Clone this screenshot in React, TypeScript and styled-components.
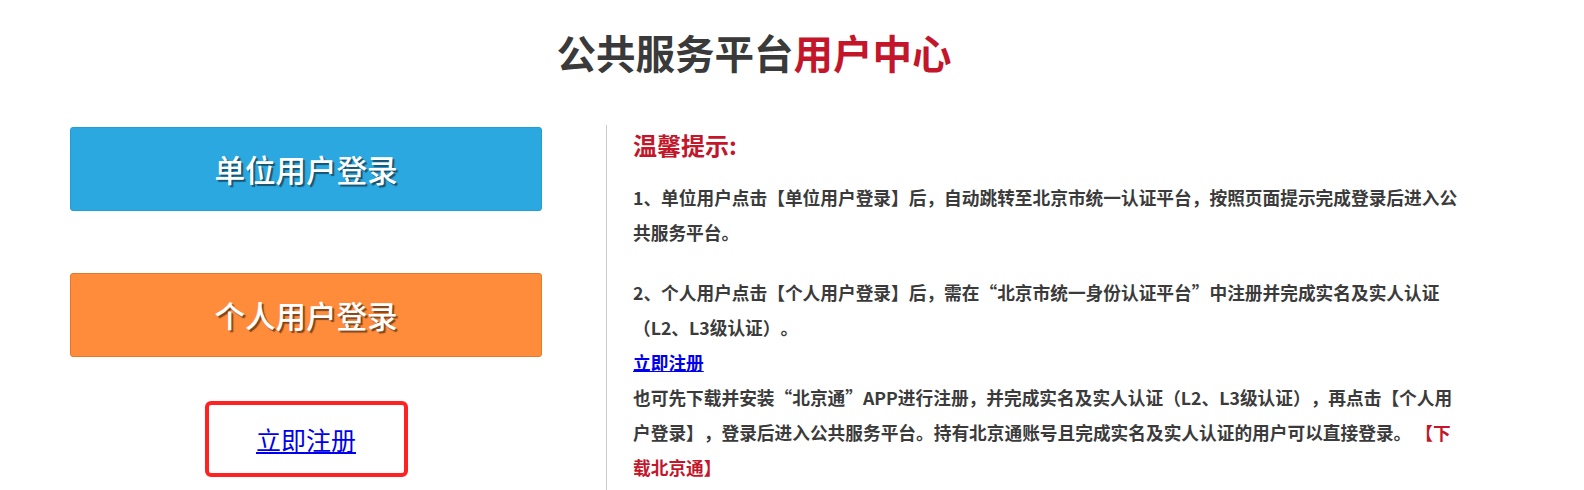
import React from 'react';
import styled, { createGlobalStyle } from 'styled-components';

const GlobalStyle = createGlobalStyle`
  html, body { margin: 0; padding: 0; background: #ffffff; }
  body {
    font-family: "Noto Sans CJK SC", "Microsoft YaHei", "Noto Sans", sans-serif;
    text-spacing-trim: space-all;
  }
`;

const Page = styled.div`
  width: 1508px;
  height: 490px;
  overflow: hidden;
`;

const Title = styled.h1`
  margin: 22px 0 0;
  height: 60px;
  line-height: 60px;
  font-size: 39.5px;
  font-weight: 700;
  text-align: center;
  color: #3a3a3a;
`;

const Accent = styled.span`
  color: #c4162a;
`;

const Main = styled.div`
  display: flex;
  margin-top: 45px;
  padding-left: 70px;
  height: 370px;
`;

const LeftCol = styled.div`
  width: 472px;
  display: flex;
  flex-direction: column;
  align-items: center;
`;

const LoginButton = styled.button<{ $tone: 'blue' | 'orange' }>`
  width: 100%;
  height: 84px;
  box-sizing: border-box;
  margin: 0;
  border: 1px solid ${(p) => (p.$tone === 'blue' ? '#1f9ed8' : '#e4772a')};
  border-radius: 3px;
  background: ${(p) => (p.$tone === 'blue' ? '#2ca8e0' : '#ff8c3b')};
  color: #ffffff;
  font-family: inherit;
  font-size: 30.5px;
  font-weight: 500;
  text-shadow: 2px 2px 1px rgba(0, 0, 0, 0.5);
  display: flex;
  align-items: center;
  justify-content: center;
  cursor: pointer;
  & + & {
    margin-top: 62px;
  }
`;

const RegisterBox = styled.div`
  margin-top: 44px;
  width: 203px;
  height: 76px;
  box-sizing: border-box;
  border: 4px solid #ff2222;
  border-radius: 6px;
  display: flex;
  align-items: center;
  justify-content: center;
`;

const RegisterLink = styled.a`
  color: #0000ee;
  font-size: 25px;
  text-decoration: underline;
  cursor: pointer;
`;

const Divider = styled.div`
  width: 1px;
  background: #cccccc;
  margin-left: 64px;
  margin-top: -2px;
  align-self: stretch;
`;

const RightCol = styled.div`
  padding-left: 26px;
`;

const Heading = styled.h2`
  margin: 0 0 18px;
  font-size: 24px;
  line-height: 35px;
  font-weight: 700;
  color: #c4162a;
`;

const Para = styled.div`
  margin: 0 0 25px;
  font-size: 17.7px;
  line-height: 35px;
  font-weight: 700;
  color: #3b3b3b;
`;

const Line = styled.span`
  display: block;
  white-space: pre;
`;

const InlineLink = styled.a`
  color: #0000ee;
  text-decoration: underline;
  cursor: pointer;
`;

const Red = styled.span`
  color: #c4162a;
`;

export default function App() {
  return (
    <Page>
      <GlobalStyle />
      <Title>
        公共服务平台<Accent>用户中心</Accent>
      </Title>
      <Main>
        <LeftCol>
          <LoginButton $tone="blue">单位用户登录</LoginButton>
          <LoginButton $tone="orange">个人用户登录</LoginButton>
          <RegisterBox>
            <RegisterLink>立即注册</RegisterLink>
          </RegisterBox>
        </LeftCol>
        <Divider />
        <RightCol>
          <Heading>温馨提示:</Heading>
          <Para>
            <Line>1、单位用户点击【单位用户登录】后，自动跳转至北京市统一认证平台，按照页面提示完成登录后进入公</Line>
            <Line>共服务平台。</Line>
          </Para>
          <Para>
            <Line>2、个人用户点击【个人用户登录】后，需在“北京市统一身份认证平台”中注册并完成实名及实人认证</Line>
            <Line>（L2、L3级认证）。</Line>
            <Line>
              <InlineLink>立即注册</InlineLink>
            </Line>
            <Line>也可先下载并安装“北京通”APP进行注册，并完成实名及实人认证（L2、L3级认证），再点击【个人用</Line>
            <Line>
              户登录】，登录后进入公共服务平台。持有北京通账号且完成实名及实人认证的用户可以直接登录。 <Red>【下</Red>
            </Line>
            <Line>
              <Red>载北京通】</Red>
            </Line>
          </Para>
        </RightCol>
      </Main>
    </Page>
  );
}
